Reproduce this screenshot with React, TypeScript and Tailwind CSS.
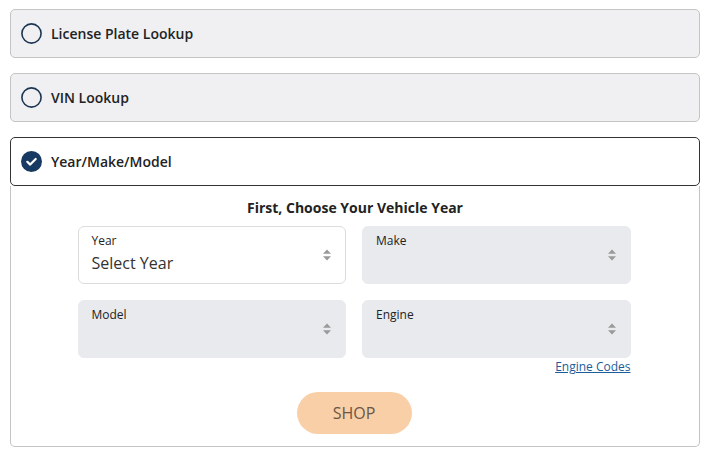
import React from 'react';

const font = { fontFamily: '"Open Sans", "Noto Sans", sans-serif' };

const Radio = ({ checked }: { checked?: boolean }) =>
  checked ? (
    <svg width="21" height="21" viewBox="0 0 21 21" className="shrink-0">
      <circle cx="10.5" cy="10.5" r="10.5" fill="#173a63" />
      <path d="M6.3 10.8l2.9 2.8 5.5-5.6" fill="none" stroke="#fff" strokeWidth="2.2" strokeLinecap="round" strokeLinejoin="round" />
    </svg>
  ) : (
    <svg width="21" height="21" viewBox="0 0 21 21" className="shrink-0">
      <circle cx="10.5" cy="10.5" r="9.6" fill="none" stroke="#1d3552" strokeWidth="1.6" />
    </svg>
  );

const Arrows = () => (
  <svg width="10" height="14" viewBox="0 0 10 14" className="shrink-0">
    <path d="M5 1.5L9 5.8H1z" fill="#9a9a9a" />
    <path d="M5 12.5L9 8.2H1z" fill="#9a9a9a" />
  </svg>
);

const SelectBox = ({ label, value, disabled }: { label: string; value?: string; disabled?: boolean }) => (
  <div
    className={`h-[58px] rounded-md border flex items-center pl-[13px] pr-[13px] ${
      disabled ? 'bg-[#e8eaed] border-[#e8eaed]' : 'bg-white border-[#dcdcdc]'
    }`}
  >
    <div className="flex-1 self-stretch pt-[5px]">
      <div className="text-[12px] leading-[18px] text-[#222]">{label}</div>
      {value && <div className="text-[16px] leading-[22px] text-[#333] mt-[2px]">{value}</div>}
    </div>
    <Arrows />
  </div>
);

const Option = ({ label }: { label: string }) => (
  <div className="h-[49px] rounded-[5px] border border-[#c4c4c4] bg-[#f0f0f2] flex items-center gap-[9px] pl-[10px]">
    <Radio />
    <span className="text-[14px] font-semibold text-[#222]">{label}</span>
  </div>
);

export default function App() {
  return (
    <div className="w-[711px] h-[457px] bg-white pt-[9px] pl-[10px] pr-[11px]" style={font}>
      <div className="flex flex-col gap-[15px]">
        <Option label="License Plate Lookup" />
        <Option label="VIN Lookup" />
        <div>
          <div className="h-[49px] rounded-[5px] border border-[#333] bg-white flex items-center gap-[9px] pl-[10px]">
            <Radio checked />
            <span className="text-[14px] font-semibold text-[#222]">Year/Make/Model</span>
          </div>
          <div className="h-[261px] border-x border-b border-[#c4c4c4] rounded-b-[5px] flex flex-col items-center pt-[12px]">
            <div className="text-[14px] font-bold text-[#222] leading-[20px]">First, Choose Your Vehicle Year</div>
            <div className="grid grid-cols-2 gap-x-[16px] gap-y-[16px] w-[553px] mr-[2px] mt-[8px]">
              <SelectBox label="Year" value="Select Year" />
              <SelectBox label="Make" disabled />
              <SelectBox label="Model" disabled />
              <SelectBox label="Engine" disabled />
            </div>
            <div className="w-[553px] mr-[2px] flex justify-end mt-[1px]">
              <a href="#" className="text-[12px] leading-[16px] text-[#1a5d9a] underline">Engine Codes</a>
            </div>
            <button className="mt-[17px] mr-[2px] w-[115px] h-[42px] rounded-full bg-[#f8cfa7] text-[16px] text-[#6b5646]">
              SHOP
            </button>
          </div>
        </div>
      </div>
    </div>
  );
}
